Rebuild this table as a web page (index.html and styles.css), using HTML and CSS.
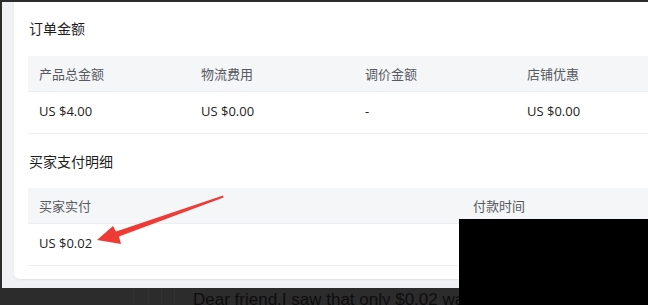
FILE: index.html
```html
<!DOCTYPE html>
<html lang="zh">
<head>
<meta charset="utf-8">
<link rel="stylesheet" href="styles.css">
</head>
<body>
<div class="page">
  <div class="panel">
    <div class="card">
      <div class="title">订单金额</div>
      <div class="table t4">
        <div class="th">产品总金额</div>
        <div class="th">物流费用</div>
        <div class="th">调价金额</div>
        <div class="th">店铺优惠</div>
        <div class="td">US $4.00</div>
        <div class="td">US $0.00</div>
        <div class="td">-</div>
        <div class="td">US $0.00</div>
      </div>
      <div class="title title2">买家支付明细</div>
      <div class="table t2">
        <div class="th">买家实付</div>
        <div class="th">付款时间</div>
        <div class="td">US $0.02</div>
        <div class="td"></div>
      </div>
    </div>
  </div>
  <div class="chat">
    <span class="ghost"></span><span class="ghost g2"></span>
    <span class="msg">Dear friend,I saw that only $0.02 was paid.</span>
  </div>
  <svg class="arrow" width="140" height="60" viewBox="90 190 140 60">
    <polygon points="97,240 113,226 116,231.5 223,195.5 223.5,197.5 119,236.5 121,244" fill="#ef3b36"/>
  </svg>
  <div class="redact"></div>
</div>
</body>
</html>
```
FILE: styles.css
```css
html, body {
  margin: 0;
  padding: 0;
  width: 648px;
  height: 305px;
  overflow: hidden;
  background: #2c2c2c;
}
.page {
  position: relative;
  width: 648px;
  height: 305px;
  padding: 2px 0 0 2px;
  box-sizing: border-box;
  font-family: "Noto Sans CJK SC", "Open Sans", sans-serif;
}
.panel {
  background: #eff1f4;
  width: 760px;
  height: 286px;
  padding: 0 0 0 12px;
  box-sizing: border-box;
}
.card {
  background: #fff;
  width: 720px;
  height: 277px;
  padding: 16px 0 0 14px;
  box-sizing: border-box;
  border-radius: 0 0 5px 5px;
  box-shadow: 0 1px 2px rgba(0,0,0,0.06);
}
.title {
  font-size: 14px;
  line-height: 20px;
  color: #1d1d1d;
  margin-left: 1px;
}
.title2 {
  margin-top: 17px;
}
.table {
  display: grid;
  margin-top: 18px;
  width: 680px;
}
.title2 + .table { margin-top: 17px; }
.t4 { grid-template-columns: 162px 164px 162px 1fr; }
.t2 { grid-template-columns: 434px 1fr; }
.th {
  background: #f5f6f8;
  height: 36px;
  line-height: 36px;
  padding-left: 11px;
  font-size: 13px;
  color: #555a60;
  border-bottom: 1px solid #eceef1;
  box-sizing: border-box;
}
.td {
  height: 42px;
  line-height: 38px;
  padding-left: 11px;
  font-family: "Open Sans", "Noto Sans CJK SC", sans-serif;
  font-size: 13px;
  color: #222;
  border-bottom: 1px solid #eceef1;
  box-sizing: border-box;
}
.chat {
  height: 17px;
  display: flex;
  align-items: flex-start;
  position: relative;
}
.ghost {
  width: 14px;
  height: 16px;
  margin-left: 131px;
  border-left: 1px solid #313131;
  border-right: 1px solid #313131;
}
.ghost.g2 { margin-left: 12px; width: 12px; }
.msg {
  margin-left: 18px;
  font-family: "Liberation Sans", Arial, sans-serif;
  font-size: 17px;
  line-height: 22px;
  margin-top: 1px;
  color: #0e0e0e;
  white-space: nowrap;
}
.arrow {
  position: absolute;
  left: 90px;
  top: 190px;
}
.redact {
  position: absolute;
  left: 459px;
  top: 219px;
  width: 189px;
  height: 86px;
  background: #000;
}
```
